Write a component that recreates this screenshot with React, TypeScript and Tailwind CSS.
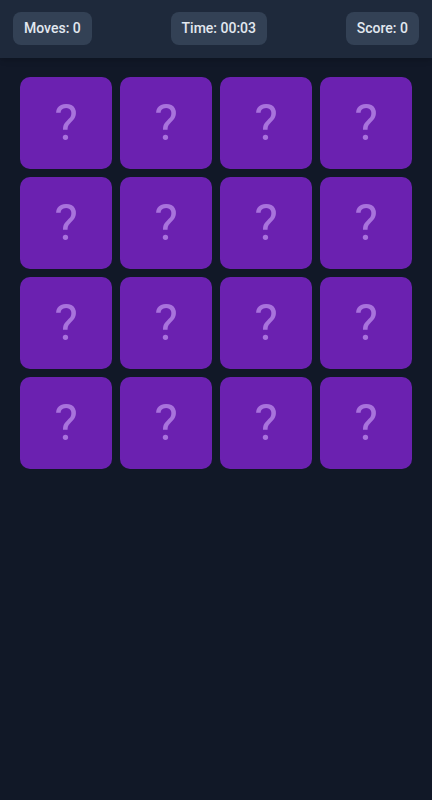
const CARDS = Array.from({ length: 16 }, (_, i) => i)

export default function App() {
  return (
    <div className="min-h-[800px] bg-[#111827] font-['Roboto',sans-serif]">
      <header className="flex items-center justify-between bg-[#1e293b] px-[13px] pt-3 pb-[13px] shadow-md">
        <Stat label="Moves: 0" />
        <Stat label="Time: 00:03" />
        <Stat label="Score: 0" />
      </header>

      <main className="grid grid-cols-4 gap-2 px-5 pt-[19px]">
        {CARDS.map((i) => (
          <button
            key={i}
            className="flex aspect-square items-center justify-center rounded-[10px] bg-[#6b21b0]"
          >
            <span className="text-[50px] leading-none text-[#a873dc]">?</span>
          </button>
        ))}
      </main>
    </div>
  )
}

function Stat({ label }: { label: string }) {
  return (
    <div className="rounded-lg bg-[#334155] px-[11px] py-1.5 text-sm font-medium leading-[21px] text-[#e2e8f0]">
      {label}
    </div>
  )
}
